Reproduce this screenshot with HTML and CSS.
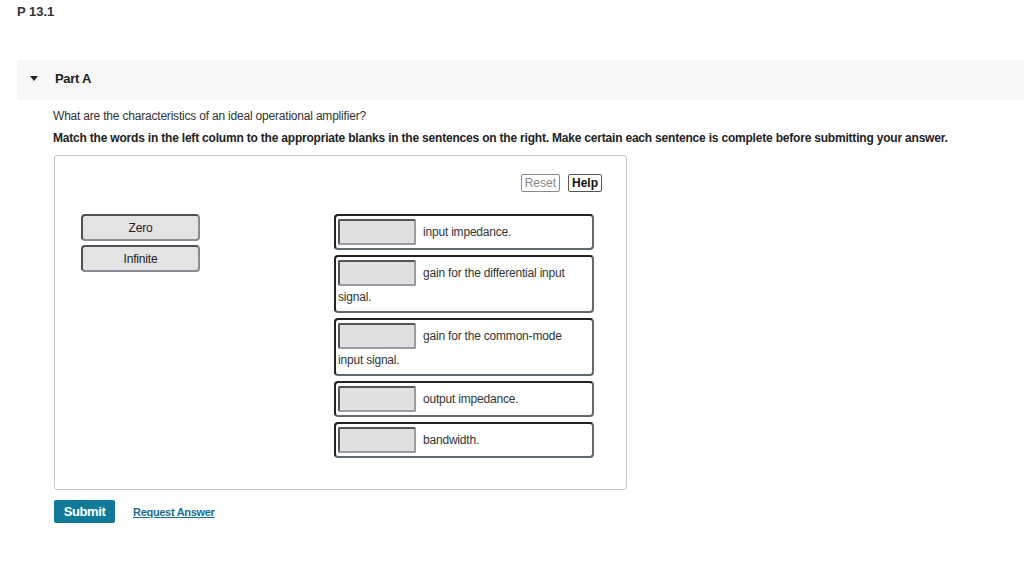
FILE: index.html
```html
<!DOCTYPE html>
<html lang="en">
<head>
  <meta charset="UTF-8">
  <title>P 13.1</title>
  <link rel="stylesheet" href="styles.css">
</head>
<body>
  <h1 class="title">P 13.1</h1>
  <div class="partBar">
    <span class="caret"></span>
    <span class="partName">Part A</span>
  </div>
  <div class="part">
    <p class="question">What are the characteristics of an ideal operational amplifier?</p>
    <p class="instr">Match the words in the left column to the appropriate blanks in the sentences on the right. Make certain each sentence is complete before submitting your answer.</p>
    <div class="dnd">
      <div class="tools">
        <button class="tool reset">Reset</button>
        <button class="tool help">Help</button>
      </div>
      <div class="cols">
        <div class="words">
          <div class="word">Zero</div>
          <div class="word">Infinite</div>
        </div>
        <div class="sentences">
          <div class="sent"><span class="blank"></span>input impedance.</div>
          <div class="sent"><span class="blank"></span>gain for the differential input signal.</div>
          <div class="sent"><span class="blank"></span>gain for the common-mode input signal.</div>
          <div class="sent"><span class="blank"></span>output impedance.</div>
          <div class="sent"><span class="blank"></span>bandwidth.</div>
        </div>
      </div>
    </div>
    <div class="actions">
      <button class="submit">Submit</button>
      <a class="request" href="#">Request Answer</a>
    </div>
  </div>
</body>
</html>
```

FILE: styles.css
```css
* {
  padding: 0;
  margin: 0;
  box-sizing: border-box;
}
body {
  font-family: "Liberation Sans", Arial, sans-serif;
  color: #333;
  background: #fff;
  letter-spacing: -0.2px;
}
.title {
  font-size: 13px;
  font-weight: 700;
  line-height: 16px;
  padding: 4px 0 0 17px;
  color: #333;
  letter-spacing: 0;
}
.partBar {
  margin: 40px 0 0 17px;
  height: 40px;
  padding-bottom: 3px;
  background: #f7f7f7;
  display: flex;
  align-items: center;
}
.caret {
  width: 0;
  height: 0;
  margin-left: 13px;
  border-top: 5px solid #222;
  border-left: 4px solid transparent;
  border-right: 4px solid transparent;
}
.partName {
  margin-left: 17px;
  font-size: 13px;
  font-weight: 700;
  color: #222;
  letter-spacing: -0.3px;
}
.part {
  padding-left: 53px;
}
.question {
  margin-top: 8px;
  font-size: 12px;
  line-height: 16px;
}
.instr {
  margin-top: 6px;
  font-size: 12px;
  line-height: 16px;
  font-weight: 700;
  color: #222;
}
.dnd {
  margin: 9px 0 0 1px;
  width: 573px;
  height: 335px;
  border: 1px solid #c4c4c4;
  border-radius: 3px;
  padding: 18px 24px 0 26px;
}
.tools {
  display: flex;
  justify-content: flex-end;
  gap: 8px;
}
.tool {
  font-family: inherit;
  font-size: 12px;
  line-height: 15px;
  height: 18px;
  padding: 0 3px;
  background: #fff;
  border: 1px solid #8a8a8a;
  border-radius: 2px;
}
.reset {
  color: #888;
}
.help {
  font-weight: 700;
  color: #111;
  border-color: #555;
}
.cols {
  display: flex;
  margin-top: 22px;
}
.words {
  width: 119px;
  display: flex;
  flex-direction: column;
  gap: 4px;
}
.word {
  height: 27px;
  line-height: 25px;
  text-align: center;
  font-size: 12px;
  color: #222;
  background: #e3e3e3;
  border: 2px solid #666;
  border-color: #4f4f56 #8a8a94 #8a8a94 #4f4f56;
  border-radius: 4px;
}
.sentences {
  margin-left: 134px;
  width: 260px;
  display: flex;
  flex-direction: column;
  gap: 5px;
}
.sent {
  border: 2px solid #333;
  border-color: #222 #5e6a6e #5e6a6e #222;
  border-radius: 4px;
  padding: 3px 10px 3px 2px;
  font-size: 12px;
  line-height: 22px;
  color: #333;
}
.blank {
  display: inline-block;
  vertical-align: -9px;
  width: 78px;
  height: 26px;
  margin-right: 7px;
  background: #e0e0e0;
  border: 2px solid #888;
  border-color: #555 #9a9aa6 #9a9aa6 #555;
  border-radius: 2px;
}
.actions {
  margin: 10px 0 0 1px;
  display: flex;
  align-items: center;
  gap: 18px;
}
.submit {
  font-family: inherit;
  width: 61px;
  height: 23px;
  font-size: 13px;
  color: #fff;
  background: #0f7b99;
  border: none;
  border-radius: 2px;
  font-weight: 700;
  letter-spacing: -0.4px;
}
.request {
  font-size: 11px;
  font-weight: 700;
  color: #1b6b8f;
  letter-spacing: -0.3px;
}
```
